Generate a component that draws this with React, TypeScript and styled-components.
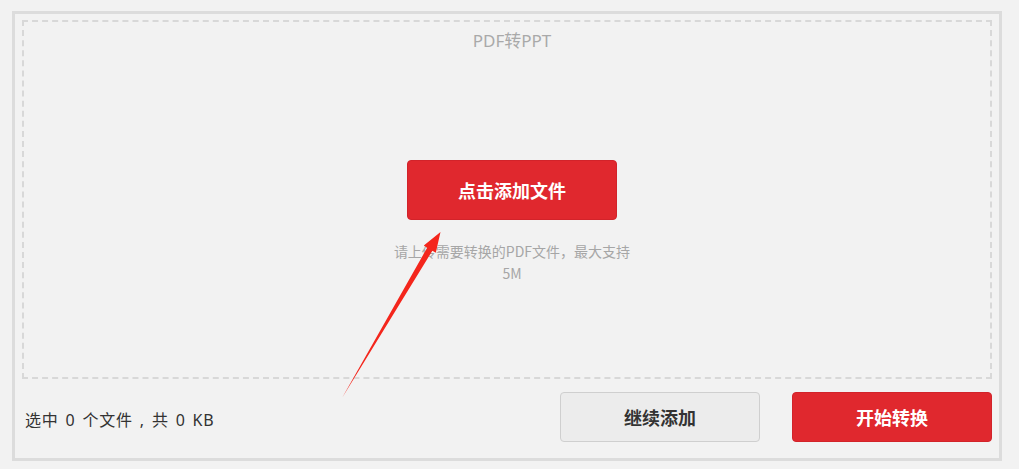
import React from 'react'
import styled, { createGlobalStyle } from 'styled-components'

const GlobalStyle = createGlobalStyle`
  html, body {
    margin: 0;
    padding: 0;
    background: #f2f2f2;
  }
  body {
    font-family: 'Noto Sans', 'Noto Sans CJK SC', sans-serif;
  }
`

const Page = styled.div`
  position: relative;
  width: 1019px;
  height: 469px;
  padding: 11px 0 0 12px;
  box-sizing: border-box;
`

const Frame = styled.div`
  width: 990px;
  height: 450px;
  box-sizing: border-box;
  border: 3px solid #dcdcdc;
  padding: 6px 7px 0 7px;
  display: flex;
  flex-direction: column;
`

const DropZone = styled.div`
  height: 359px;
  box-sizing: border-box;
  border: 2px dashed #d8d8d8;
  display: flex;
  flex-direction: column;
  align-items: center;
  padding: 7px 0 0 10px;
`

const Title = styled.div`
  font-size: 17px;
  line-height: 24px;
  color: #a9a9a9;
`

const Button = styled.button<{ $variant: 'primary' | 'plain' }>`
  box-sizing: border-box;
  border-radius: 4px;
  font-family: 'Noto Sans CJK SC', sans-serif;
  font-weight: 700;
  font-size: 18px;
  cursor: pointer;
  outline: 0;
  background: ${p => (p.$variant === 'primary' ? '#e0282e' : '#ececec')};
  color: ${p => (p.$variant === 'primary' ? '#ffffff' : '#333333')};
  border: 1px solid ${p => (p.$variant === 'primary' ? '#d2232a' : '#cfcfcf')};
`

const AddButton = styled(Button)`
  width: 210px;
  height: 60px;
  margin-top: 107px;
`

const Hint = styled.div`
  width: 244px;
  margin-top: 20px;
  text-align: center;
  font-family: 'Noto Sans CJK SC', sans-serif;
  font-size: 14px;
  line-height: 22px;
  color: #a6a6a6;
`

const Footer = styled.div`
  display: flex;
  align-items: center;
  padding: 13px 0 0 3px;
`

const Summary = styled.div`
  flex: 1;
  font-size: 16px;
  letter-spacing: 0.8px;
  word-spacing: 2px;
  color: #333333;
  padding-top: 3px;
`

const Actions = styled.div`
  display: flex;
  gap: 32px;
`

const ActionButton = styled(Button)`
  width: 200px;
  height: 50px;
`

const Arrow = styled.svg`
  position: absolute;
  left: 335px;
  top: 225px;
  width: 115px;
  height: 180px;
  pointer-events: none;
`

export default function App() {
  return (
    <Page>
      <GlobalStyle />
      <Frame>
        <DropZone>
          <Title>PDF转PPT</Title>
          <AddButton $variant="primary">点击添加文件</AddButton>
          <Hint>请上传需要转换的PDF文件，最大支持5M</Hint>
        </DropZone>
        <Footer>
          <Summary>选中 0 个文件 , 共 0 KB</Summary>
          <Actions>
            <ActionButton $variant="plain">继续添加</ActionButton>
            <ActionButton $variant="primary">开始转换</ActionButton>
          </Actions>
        </Footer>
      </Frame>
      <Arrow viewBox="335 225 115 180">
        <polygon
          points="342,398 427.2,247.7 423.8,245.6 440.5,232 435.8,252.8 432.4,250.7"
          fill="#f4261c"
        />
      </Arrow>
    </Page>
  )
}
